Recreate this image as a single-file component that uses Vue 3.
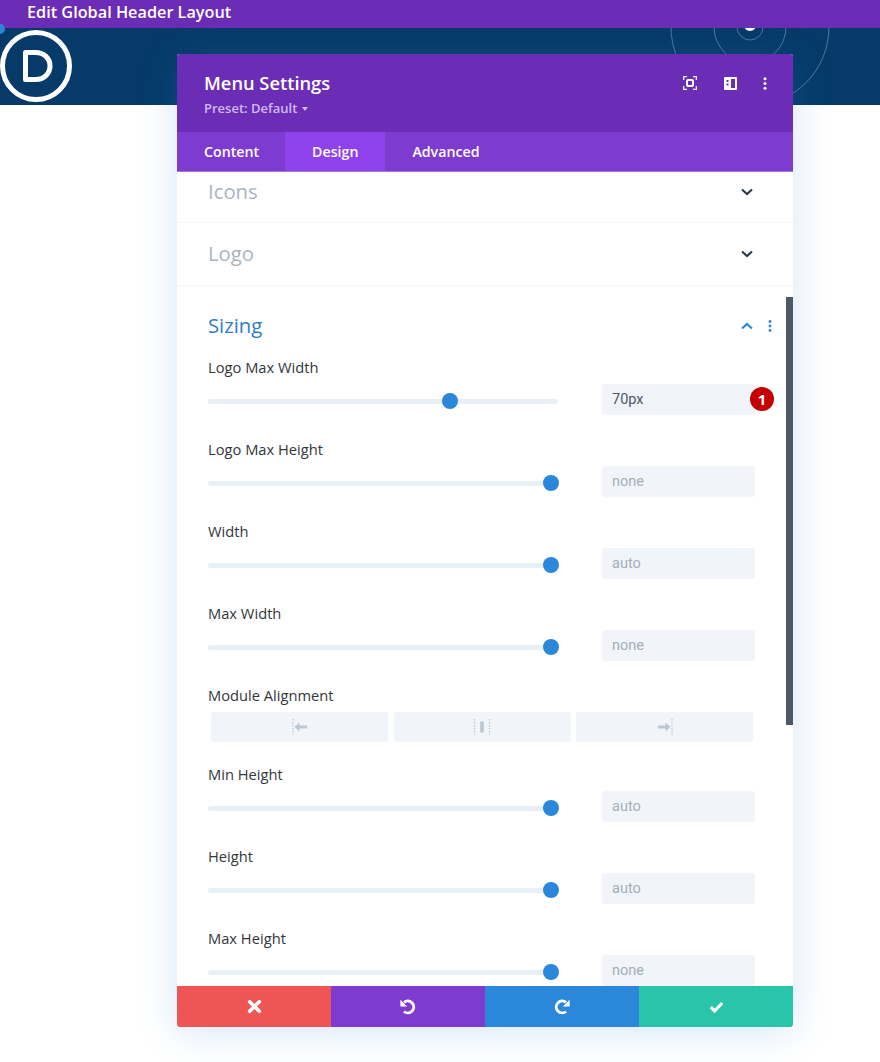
<template>
  <div class="page">
    <div class="top-bar">Edit Global Header Layout</div>

    <div class="hero">
      <span class="hero-dot"></span>
      <svg class="logo" width="74" height="74" viewBox="0 0 74 74">
        <circle cx="36" cy="37" r="33.5" fill="none" stroke="#fff" stroke-width="5" />
        <path d="M25.500 23.500h10c8.500 0 14.500 5.800 14.500 13.500s-6 13.500-14.500 13.500h-10z" fill="none" stroke="#fff" stroke-width="5" stroke-linejoin="round" />
      </svg>
      <svg class="rings" width="170" height="77" viewBox="0 0 170 77">
        <circle cx="80" cy="-1" r="13" />
        <circle cx="80" cy="-1" r="36" />
        <circle cx="80" cy="-1" r="79" />
        <circle cx="80" cy="-3" r="6" class="rings-core" />
      </svg>
    </div>

    <div class="modal">
      <header class="modal-head">
        <div>
          <h1>Menu Settings</h1>
          <p>Preset: Default <i class="caret"></i></p>
        </div>
        <div class="head-icons">
          <svg width="14" height="14" viewBox="0 0 14 14" fill="none" stroke="#fff" stroke-width="1.200">
            <path d="M.7 4V.7H4M10 .7h3.300V4M13.300 10v3.300H10M4 13.300H.7V10" />
            <rect x="4" y="4" width="6" height="6" rx="1" stroke-width="2" />
          </svg>
          <svg class="layout-icon" width="13" height="13" viewBox="0 0 13 13">
            <path fill="#fff" fill-rule="evenodd" d="M1 0h11a1 1 0 0 1 1 1v11a1 1 0 0 1-1 1H1a1 1 0 0 1-1-1V1a1 1 0 0 1 1-1zm6 2v9h4V2zM2.500 3v2h2V3zm0 3.500v2h2v-2z" />
          </svg>
          <svg width="4" height="13" viewBox="0 0 4 13" fill="#fff">
            <circle cx="2" cy="1.700" r="1.500" />
            <circle cx="2" cy="6.500" r="1.500" />
            <circle cx="2" cy="11.300" r="1.500" />
          </svg>
        </div>
      </header>

      <nav class="tabs">
        <span class="tab">Content</span>
        <span class="tab active">Design</span>
        <span class="tab">Advanced</span>
      </nav>

      <div class="body">
        <div class="scroll">
          <section class="closed first">
            <h2>Icons</h2>
            <svg class="chev" width="12" height="8" viewBox="0 0 12 8"><path d="M1 1.500 6 6l5-4.500" /></svg>
          </section>
          <section class="closed logo-row">
            <h2>Logo</h2>
            <svg class="chev" width="12" height="8" viewBox="0 0 12 8"><path d="M1 1.500 6 6l5-4.500" /></svg>
          </section>

          <section class="sizing">
            <div class="sizing-head">
              <h2>Sizing</h2>
              <div class="sizing-tools">
                <svg class="chev open" width="12" height="8" viewBox="0 0 12 8"><path d="M1 6.500 6 2l5 4.500" /></svg>
                <svg width="4" height="12" viewBox="0 0 4 12" fill="#2b87da">
                  <circle cx="2" cy="1.500" r="1.400" />
                  <circle cx="2" cy="6" r="1.400" />
                  <circle cx="2" cy="10.500" r="1.400" />
                </svg>
              </div>
            </div>

            <template v-for="row in rows" :key="row.label">
              <div v-if="row.align" class="row align-row">
                <label>{{ row.label }}</label>
                <div class="align-btns">
                  <button>
                    <svg width="18" height="18" viewBox="0 0 18 18">
                      <path class="dotted" d="M2 1v16" />
                      <path class="solid" d="M3.500 9l5-4.500v3h7.500v3H8.500v3z" />
                    </svg>
                  </button>
                  <button>
                    <svg width="18" height="18" viewBox="0 0 18 18">
                      <path class="dotted" d="M1.500 1v16M16.500 1v16" />
                      <rect class="solid" x="7.200" y="3.500" width="3.600" height="11" />
                    </svg>
                  </button>
                  <button>
                    <svg width="18" height="18" viewBox="0 0 18 18">
                      <path class="dotted" d="M16 1v16" />
                      <path class="solid" d="M14.500 9l-5-4.500v3H2v3h7.500v3z" />
                    </svg>
                  </button>
                </div>
              </div>
              <div v-else class="row">
                <label>{{ row.label }}</label>
                <div class="control">
                  <div class="track">
                    <span class="thumb" :style="{ left: row.pos + 'px' }"></span>
                  </div>
                  <div class="value-wrap">
                    <div class="value" :class="{ set: row.badge }">{{ row.value }}</div>
                    <span v-if="row.badge" class="badge">1</span>
                  </div>
                </div>
              </div>
            </template>
          </section>
        </div>
        <div class="scrollbar"></div>
      </div>

      <footer class="actions">
        <button class="btn-red">
          <svg width="15" height="15" viewBox="0 0 14 14"><path d="M2.500 2.500l9 9M11.500 2.500l-9 9" fill="none" stroke="#fff" stroke-width="3.400" stroke-linecap="round" /></svg>
        </button>
        <button class="btn-purple">
          <svg width="18" height="18" viewBox="0 0 16 16" fill="none">
            <path d="M4.500 3.800A5.300 5.300 0 1 1 4.400 12" stroke="#fff" stroke-width="2.600" />
            <path d="M1.200 1.500v6h6z" fill="#fff" />
          </svg>
        </button>
        <button class="btn-blue">
          <svg width="18" height="18" viewBox="0 0 16 16" fill="none">
            <path d="M11.500 3.800A5.300 5.300 0 1 0 11.600 12" stroke="#fff" stroke-width="2.600" />
            <path d="M14.800 1.500v6h-6z" fill="#fff" />
          </svg>
        </button>
        <button class="btn-green">
          <svg width="15" height="12" viewBox="0 0 15 12"><path d="M1.800 6.200 5.600 10 13.200 2" fill="none" stroke="#fff" stroke-width="3.200" /></svg>
        </button>
      </footer>
    </div>
  </div>
</template>

<script setup>
// 슬라이더 행 데이터
const rows = [
  { label: 'Logo Max Width', value: '70px', pos: 242, badge: true },
  { label: 'Logo Max Height', value: 'none', pos: 343.25 },
  { label: 'Width', value: 'auto', pos: 343.25 },
  { label: 'Max Width', value: 'none', pos: 343.25 },
  { label: 'Module Alignment', align: true },
  { label: 'Min Height', value: 'auto', pos: 343.25 },
  { label: 'Height', value: 'auto', pos: 343.25 },
  { label: 'Max Height', value: 'none', pos: 343.25 },
];
</script>

<style>
body {
  margin: 0;
  background: #fff;
}
</style>

<style scoped>
.page {
  position: relative;
  width: 880px;
  height: 1062px;
  overflow: hidden;
  background: #fff;
  font-family: 'Open Sans', 'Liberation Sans', sans-serif;
}

.top-bar {
  height: 28px;
  padding-left: 27px;
  box-sizing: border-box;
  background: #6b2db5;
  color: #fff;
  font-size: 16.250px;
  font-weight: 600;
  line-height: 24px;
}

.hero {
  position: relative;
  height: 77px;
  background: #063a68;
}

.hero-dot {
  position: absolute;
  left: -5px;
  top: -4px;
  width: 10px;
  height: 10px;
  border-radius: 50%;
  background: #2b87da;
}

.logo {
  position: absolute;
  left: 0;
  top: 1px;
}

.rings {
  position: absolute;
  left: 670px;
  top: 0;
}

.rings circle {
  fill: none;
  stroke: #4f7898;
  stroke-width: 1;
}

.rings .rings-core {
  fill: #fff;
  stroke: none;
}

/* 설정 창 */
.modal {
  position: absolute;
  left: 177px;
  top: 54px;
  width: 616px;
  height: 973px;
  display: flex;
  flex-direction: column;
  border-radius: 3px;
  background: #fff;
  box-shadow: 0 5px 40px rgba(43, 135, 218, 0.2);
}

.modal-head {
  height: 78px;
  flex: none;
  display: flex;
  justify-content: space-between;
  padding: 17px 26px 0 27px;
  box-sizing: border-box;
  border-radius: 3px 3px 0 0;
  background: #6b2db5;
  color: #fff;
}

.modal-head h1 {
  margin: 0;
  font-size: 18.300px;
  font-weight: 600;
  line-height: 24px;
}

.modal-head p {
  margin: 4px 0 0;
  font-size: 13px;
  font-weight: 600;
  line-height: 18px;
  color: #d3b9f2;
}

.caret {
  display: inline-block;
  margin-left: 1px;
  vertical-align: 2px;
  border: 3px solid transparent;
  border-top: 4px solid #d3b9f2;
  border-bottom: 0;
}

.head-icons {
  display: flex;
  align-items: center;
  gap: 27px;
  height: 24px;
}

.layout-icon {
  margin-right: -0.500px;
}

.tabs {
  height: 40px;
  flex: none;
  display: flex;
  box-sizing: border-box;
  background: #7d3bcf;
  border-bottom: 1px solid #a676dd;
}

.tab {
  display: flex;
  align-items: center;
  padding: 0 26px 0 27px;
  color: #fff;
  font-size: 14.200px;
  font-weight: 600;
}

.tab.active {
  padding: 0 27px;
  background: #8f42ec;
}

.body {
  position: relative;
  flex: 1;
  overflow: hidden;
}

.scroll {
  margin-top: -13px;
}

.closed {
  display: flex;
  align-items: center;
  justify-content: space-between;
  box-sizing: border-box;
  padding: 0 40px 0 31px;
  border-bottom: 1px solid #f5f6f8;
}

.first {
  height: 64px;
  padding-top: 2px;
}

.logo-row {
  height: 63px;
}

h2 {
  margin: -2px 0 0;
  color: #a9b4c0;
  font-size: 20.300px;
  font-weight: 400;
  line-height: 26px;
}

.chev {
  fill: none;
  stroke: #2f3b47;
  stroke-width: 2.200;
}

.chev.open {
  stroke: #2b87da;
}

.sizing {
  padding: 27px 31px 0;
}

.sizing-head {
  display: flex;
  align-items: center;
  justify-content: space-between;
  height: 26px;
  margin-bottom: 19px;
}

.sizing-head h2 {
  color: #2f7ec4;
}

.sizing-tools {
  display: flex;
  align-items: center;
  gap: 15px;
  margin-right: -10px;
}

.row {
  height: 57px;
  margin-bottom: 25px;
}

.row label {
  display: block;
  height: 20px;
  margin-bottom: 6px;
  color: #32373c;
  font-size: 14.700px;
  font-weight: 500;
  line-height: 18px;
}

.control {
  display: flex;
  align-items: center;
  justify-content: space-between;
  width: 547px;
}

.track {
  position: relative;
  width: 350px;
  height: 5px;
  margin-top: 3px;
  border-radius: 3px;
  background: #e8eff6;
}

.thumb {
  position: absolute;
  top: -5.500px;
  width: 16px;
  height: 16px;
  margin-left: -8px;
  border-radius: 50%;
  background: #2b87da;
}

.value-wrap {
  position: relative;
}

.value {
  width: 153px;
  height: 31px;
  padding-left: 10px;
  box-sizing: border-box;
  border-radius: 3px;
  background: #f1f5f9;
  color: #a3aeba;
  font-family: Roboto, 'Liberation Sans', sans-serif;
  font-size: 14.500px;
  line-height: 31px;
}

.value.set {
  color: #4c5866;
}

.badge {
  position: absolute;
  left: 148px;
  top: 3px;
  width: 24px;
  height: 24px;
  border-radius: 50%;
  background: #c40000;
  color: #fff;
  font-size: 15px;
  font-weight: 700;
  line-height: 24px;
  text-align: center;
}

.align-row {
  height: 56px;
  margin-bottom: 23px;
}

.align-btns {
  display: flex;
  gap: 5.500px;
  padding-left: 3px;
}

.align-btns button {
  width: 177px;
  height: 30px;
  display: flex;
  align-items: center;
  justify-content: center;
  padding: 0;
  border: 0;
  border-radius: 3px;
  background: #f1f5f9;
}

.dotted {
  fill: none;
  stroke: #bcc7d3;
  stroke-width: 1.300;
  stroke-dasharray: 1.500 1.500;
}

.solid {
  fill: #bcc7d3;
}

.scrollbar {
  position: absolute;
  right: 0;
  top: 125px;
  width: 7px;
  height: 428px;
  background: #4c5866;
}

.actions {
  height: 41px;
  flex: none;
  display: flex;
  border-radius: 0 0 3px 3px;
  overflow: hidden;
}

.actions button {
  flex: 1;
  display: flex;
  align-items: center;
  justify-content: center;
  padding: 0;
  border: 0;
}

.btn-red {
  background: #ef5555;
}

.btn-purple {
  background: #7d3bcf;
}

.btn-blue {
  background: #2b87da;
}

.btn-green {
  background: #29c4a9;
}
</style>
